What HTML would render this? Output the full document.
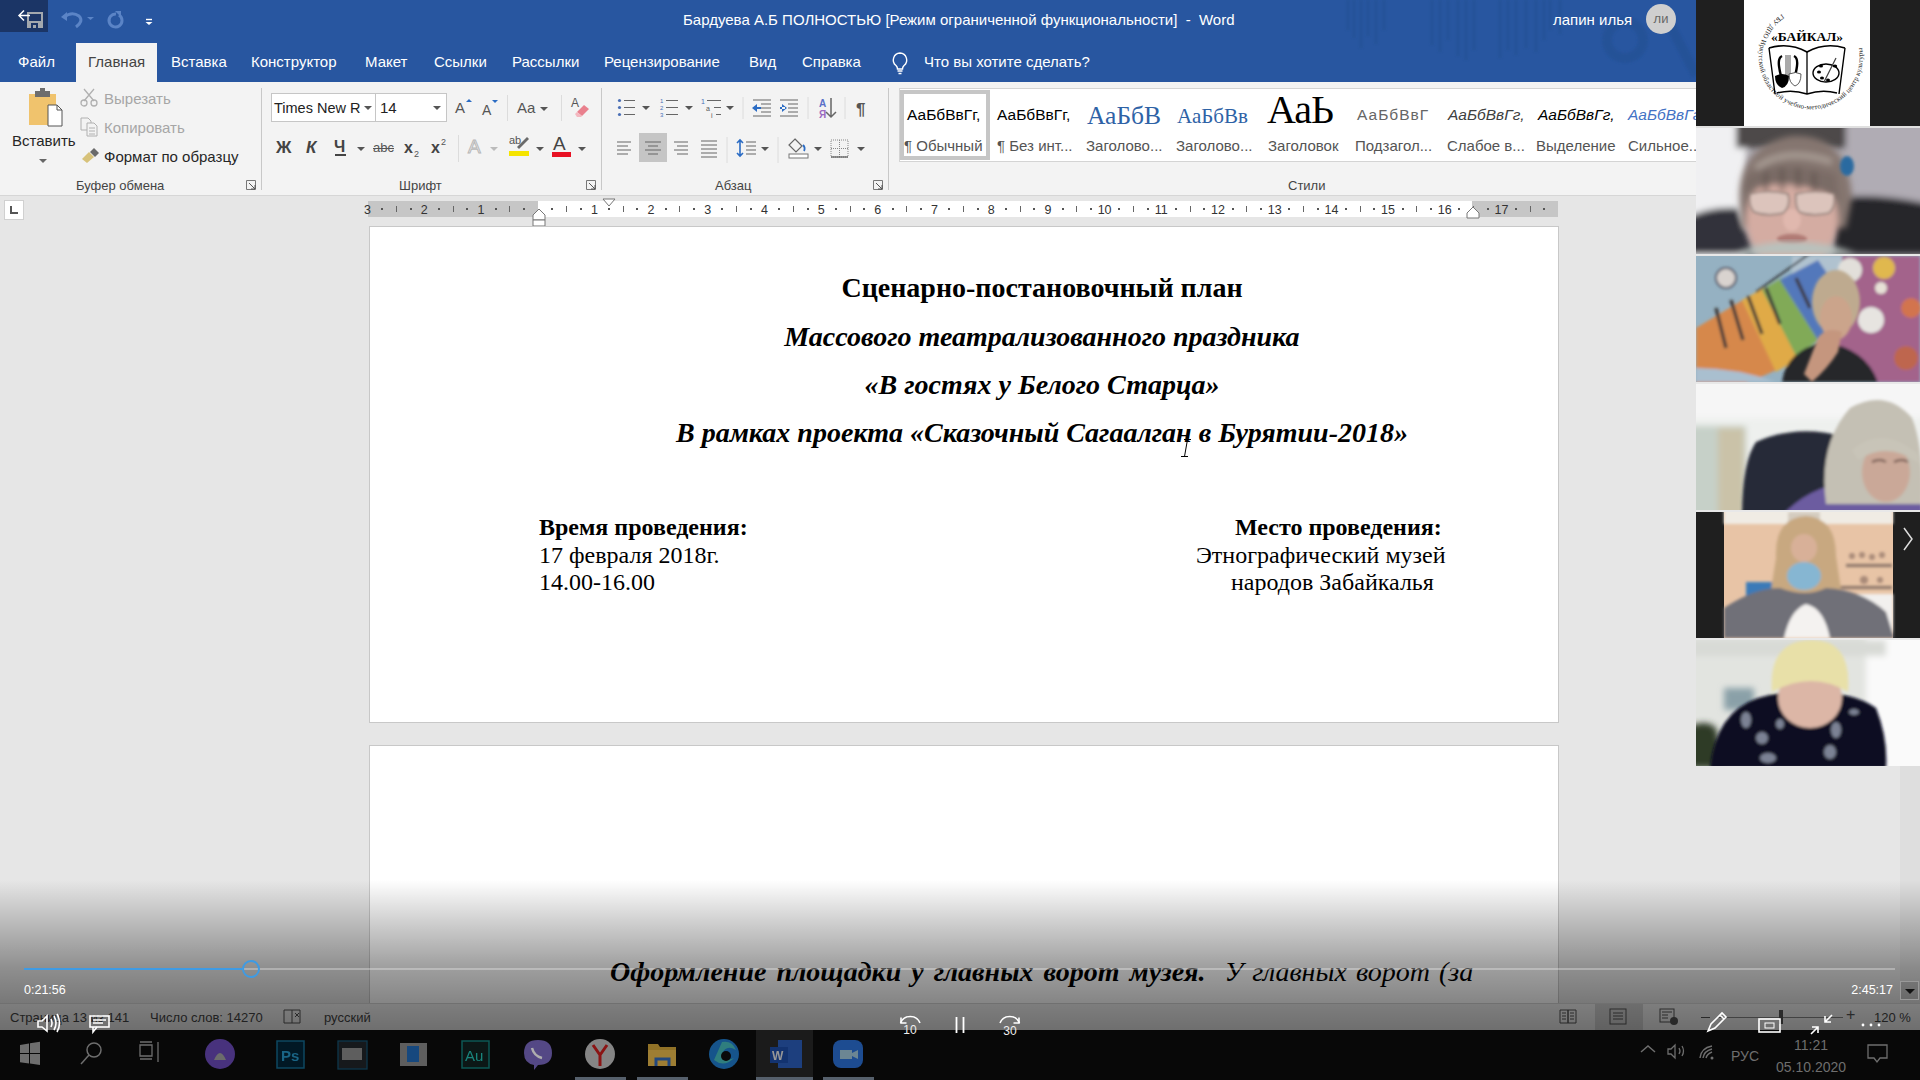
<!DOCTYPE html>
<html><head><meta charset="utf-8">
<style>
*{margin:0;padding:0;box-sizing:border-box}
html,body{width:1920px;height:1080px;overflow:hidden;background:#e6e6e6;font-family:"Liberation Sans",sans-serif;position:relative}
.a{position:absolute}
svg{position:absolute;overflow:visible}
.tt{color:#fff;font-size:15px;white-space:nowrap;line-height:18px}
.tab{color:#fff;font-size:15px;top:53px;white-space:nowrap;line-height:18px}
.rl{font-size:13px;color:#444;white-space:nowrap;line-height:16px;top:178px}
.rt{font-size:15px;color:#262626;white-space:nowrap;line-height:18px}
.sep{width:1px;background:#dadada}
.ser{font-family:"Liberation Serif",serif;color:#000;white-space:nowrap}
.rn{font-size:12.5px;color:#333;top:203px;width:20px;text-align:center;line-height:14px}
.sty{font-size:15.5px;color:#000;white-space:nowrap;line-height:18px;top:106px}
.sn{font-size:15px;color:#545454;white-space:nowrap;line-height:18px;top:137px}
.dd{width:0;height:0;border-left:4px solid transparent;border-right:4px solid transparent;border-top:4px solid #555}

</style></head><body>
<div class="a" style="left:0;top:0;width:1696px;height:82px;background:#2856a0"></div>
<div class="a" style="left:0;top:0;width:48px;height:32px;background:#1b3566"></div>
<!-- back/save icon -->
<svg style="left:0;top:0" width="48" height="32"><path d="M27 12h16v16h-16z" fill="#a3a8ae"/><path d="M29 14h12v7h-12z" fill="#1c3566"/><path d="M31 23h7v5h-7z" fill="#1c3566"/><path d="M33 25h3v3h-3z" fill="#a3a8ae"/><path d="M19 15.5h11M24 10.5l-5 5 5 5" stroke="#fff" stroke-width="1.5" fill="none"/></svg>
<!-- undo / redo -->
<svg style="left:56px;top:0" width="100" height="40"><path d="M8 17q8-6 15 -1q5 5 -3 11" stroke="#5b84c6" stroke-width="3" fill="none"/><path d="M5 17l6-5v9z" fill="#5b84c6"/><path d="M31 17h7l-3.5 3z" fill="#5b84c6"/><path d="M60 14a6.5 6.5 0 1 0 3 1" stroke="#5b84c6" stroke-width="3" fill="none"/><path d="M59 11h6v6z" fill="#5b84c6"/><path d="M90 19.5h6" stroke="#fff" stroke-width="1.4"/><path d="M89.5 22h7l-3.5 3z" fill="#fff"/></svg>
<div class="a tt" style="left:683px;top:11px">Бардуева А.Б ПОЛНОСТЬЮ [Режим ограниченной функциональности]&nbsp; - &nbsp;Word</div>
<!-- faint pattern -->
<svg style="left:1340px;top:0" width="356" height="82" opacity="0.5" filter="url(#pb)"><defs><filter id="pb"><feGaussianBlur stdDeviation="1.2"/></filter></defs><g stroke="#2150928" stroke-width="3" style="stroke:#224f90"><path d="M8 0v30M14 0v38M21 0v48M28 0v36M36 0v44M44 0v30"/><path d="M92 0v45M100 0v52M108 0v40M118 0v56M126 0v60M134 0v50"/><path d="M160 0v58M168 0v50M176 0v55M186 0v48M196 0v52M204 0v40"/><path d="M210 0v30M220 0v34"/></g><circle cx="285" cy="40" r="18" fill="none" style="stroke:#224f90" stroke-width="10"/><path d="M330 25l26 50" style="stroke:#224f90" stroke-width="10"/></svg>
<div class="a tt" style="left:1553px;top:11px">лапин илья</div>
<div class="a" style="left:1646px;top:4px;width:30px;height:30px;border-radius:50%;background:#cfcfcf;color:#666;font-size:13px;text-align:center;line-height:30px">ли</div>
<div class="a" style="left:76px;top:43px;width:81px;height:39px;background:#f3f3f3"></div>
<div class="a tab" style="left:18px">Файл</div>
<div class="a tab" style="left:88px;color:#444">Главная</div>
<div class="a tab" style="left:171px">Вставка</div>
<div class="a tab" style="left:251px">Конструктор</div>
<div class="a tab" style="left:365px">Макет</div>
<div class="a tab" style="left:434px">Ссылки</div>
<div class="a tab" style="left:512px">Рассылки</div>
<div class="a tab" style="left:604px">Рецензирование</div>
<div class="a tab" style="left:749px">Вид</div>
<div class="a tab" style="left:802px">Справка</div>
<svg style="left:890px;top:51px" width="22" height="24"><path d="M10 2a7 7 0 0 0-4 12.5c1 1 1.5 2 1.5 3.5h5c0-1.5.5-2.5 1.5-3.5A7 7 0 0 0 10 2z" stroke="#fff" stroke-width="1.4" fill="none"/><path d="M7.5 20h5M8.5 22.5h3" stroke="#fff" stroke-width="1.4"/></svg>
<div class="a tab" style="left:924px">Что вы хотите сделать?</div>

<div class="a" style="left:0;top:82px;width:1696px;height:113px;background:#f3f3f3"></div>
<div class="a" style="left:0;top:195px;width:1696px;height:1px;background:#d6d6d6"></div>
<!-- Clipboard group -->
<svg style="left:26px;top:88px" width="42" height="42"><rect x="3" y="6" width="27" height="31" fill="#f0c36d"/><rect x="9" y="3" width="15" height="6" fill="#6d6d6d"/><rect x="14" y="0" width="5" height="4" fill="#6d6d6d"/><path d="M22 17h9l5 5v16h-14z" fill="#fff" stroke="#555" stroke-width="1"/><path d="M31 17v5h5" fill="none" stroke="#555" stroke-width="1"/></svg>
<div class="a rt" style="left:12px;top:132px">Вставить</div>
<div class="a dd" style="left:39px;top:159px;border-top-color:#666"></div>
<svg style="left:80px;top:88px" width="20" height="20"><path d="M4 1l10 12M14 1L4 13" stroke="#b0b0b0" stroke-width="1.3"/><circle cx="4" cy="15" r="3" fill="none" stroke="#b0b0b0" stroke-width="1.3"/><circle cx="14" cy="15" r="3" fill="none" stroke="#b0b0b0" stroke-width="1.3"/></svg>
<div class="a rt" style="left:104px;top:90px;color:#a6a6a6">Вырезать</div>
<svg style="left:80px;top:117px" width="20" height="20"><path d="M1 1h7l3 3v9H1z" fill="none" stroke="#b0b0b0"/><path d="M7 6h7l3 3v10H7z" fill="#f3f3f3" stroke="#b0b0b0"/><path d="M9 11h6M9 14h6M9 17h6" stroke="#b0b0b0"/></svg>
<div class="a rt" style="left:104px;top:119px;color:#a6a6a6">Копировать</div>
<svg style="left:81px;top:148px" width="20" height="18"><path d="M1 11l7-7 5 5-7 6z" fill="#d7c27a"/><path d="M9 4l5 5 4-4-5-5z" fill="#6a6a6a"/></svg>
<div class="a rt" style="left:104px;top:148px">Формат по образцу</div>
<div class="a rl" style="left:76px">Буфер обмена</div>
<svg style="left:246px;top:180px" width="11" height="11"><path d="M0.5 0.5h9v9M0.5 0.5v9h9" fill="none" stroke="#777"/><path d="M3 3l6 6M9 5v4H5" stroke="#555" fill="none"/></svg>
<div class="a sep" style="left:261px;top:88px;height:102px;background:#c8c8c8"></div>

<!-- Font group -->
<div class="a" style="left:271px;top:93px;width:176px;height:29px;background:#fff;border:1px solid #c6c6c6"></div>
<div class="a" style="left:375px;top:93px;width:1px;height:29px;background:#c6c6c6"></div>
<div class="a rt" style="left:274px;top:99px;color:#222;font-size:14.5px">Times New R</div>
<div class="a dd" style="left:364px;top:106px"></div>
<div class="a rt" style="left:380px;top:99px;color:#222">14</div>
<div class="a dd" style="left:433px;top:106px"></div>
<div class="a" style="left:455px;top:99px;font-size:15px;color:#555;line-height:18px">A</div>
<div class="a" style="left:466px;top:99px;border-left:3px solid transparent;border-right:3px solid transparent;border-bottom:3px solid #2b6cc4"></div>
<div class="a" style="left:482px;top:101px;font-size:14px;color:#555;line-height:18px">A</div>
<div class="a" style="left:492px;top:100px;border-left:3px solid transparent;border-right:3px solid transparent;border-top:3px solid #2b6cc4"></div>
<div class="a sep" style="left:507px;top:95px;height:26px;background:#dcdcdc"></div>
<div class="a" style="left:517px;top:99px;font-size:15px;color:#555;line-height:18px">Aa</div>
<div class="a dd" style="left:540px;top:107px"></div>
<div class="a sep" style="left:561px;top:95px;height:26px;background:#dcdcdc"></div>
<div class="a" style="left:571px;top:96px;font-size:12px;color:#555;line-height:14px">A</div>
<svg style="left:572px;top:102px" width="18" height="16"><path d="M5 10l7-7 5 4-7 7z" fill="#e9808d"/><path d="M3 12l2-2 5 4-1 1H5z" fill="#f4b8c0"/></svg>
<div class="a" style="left:276px;top:138px;font-size:17px;font-weight:bold;color:#444;line-height:20px">Ж</div>
<div class="a" style="left:306px;top:138px;font-size:17px;font-weight:bold;font-style:italic;color:#444;line-height:20px">К</div>
<div class="a" style="left:334px;top:137px;font-size:16px;font-weight:bold;color:#444;line-height:20px">Ч</div>
<div class="a" style="left:335px;top:154px;width:11px;height:1.5px;background:#444"></div>
<div class="a dd" style="left:357px;top:147px"></div>
<div class="a" style="left:373px;top:140px;font-size:13px;color:#555;line-height:16px">abc</div>
<div class="a" style="left:373px;top:148px;width:21px;height:1px;background:#555"></div>
<div class="a" style="left:404px;top:138px;font-size:16px;font-weight:bold;color:#444;line-height:20px">x</div>
<div class="a" style="left:414px;top:149px;font-size:9px;color:#555;line-height:10px">2</div>
<div class="a" style="left:431px;top:138px;font-size:16px;font-weight:bold;color:#444;line-height:20px">x</div>
<div class="a" style="left:441px;top:137px;font-size:9px;color:#555;line-height:10px">2</div>
<div class="a sep" style="left:458px;top:135px;height:27px;background:#dcdcdc"></div>
<div class="a" style="left:468px;top:137px;font-size:19px;color:#f3f3f3;-webkit-text-stroke:1px #b8b8b8;line-height:20px">A</div>
<div class="a dd" style="left:490px;top:147px;border-top-color:#bbb"></div>
<div class="a" style="left:509px;top:134px;font-size:11px;color:#555;line-height:12px">ab</div>
<svg style="left:510px;top:136px" width="20" height="14"><path d="M7 11l10-10 2 2-10 10z" fill="#6a6a6a"/></svg>
<div class="a" style="left:509px;top:151px;width:20px;height:5px;background:#f5e400"></div>
<div class="a dd" style="left:536px;top:147px"></div>
<div class="a" style="left:553px;top:134px;font-size:19px;color:#444;line-height:20px">A</div>
<div class="a" style="left:552px;top:152px;width:19px;height:5px;background:#e81123"></div>
<div class="a dd" style="left:578px;top:147px"></div>
<div class="a rl" style="left:399px">Шрифт</div>
<svg style="left:586px;top:180px" width="11" height="11"><path d="M0.5 0.5h9v9M0.5 0.5v9h9" fill="none" stroke="#777"/><path d="M3 3l6 6M9 5v4H5" stroke="#555" fill="none"/></svg>
<div class="a sep" style="left:601px;top:88px;height:102px;background:#c8c8c8"></div>

<!-- Paragraph group -->
<svg style="left:612px;top:96px" width="260" height="24">
<g fill="#4a6fb5"><circle cx="7.5" cy="4.5" r="1.6"/><circle cx="7.5" cy="11.5" r="1.6"/><circle cx="7.5" cy="18.5" r="1.6"/></g>
<g stroke="#666" stroke-width="1.2"><path d="M12 4.5h11M12 11.5h11M12 18.5h11"/></g>
<path d="M30 10h8l-4 4z" fill="#555"/>
<g fill="#4a6fb5" font-size="6" font-family="Liberation Sans"><text x="48" y="7">1</text><text x="48" y="14">2</text><text x="48" y="21">3</text></g>
<g stroke="#666" stroke-width="1.2"><path d="M54 4.5h12M54 11.5h12M54 18.5h12"/></g>
<path d="M73 10h8l-4 4z" fill="#555"/>
<g fill="#555" font-size="7" font-family="Liberation Sans"><text x="89" y="8" fill="#4a6fb5">1</text><text x="94" y="15">a</text><text x="99" y="22">i</text></g>
<g stroke="#666" stroke-width="1.2"><path d="M95 4.5h14M102 11.5h7M104 18.5h5"/></g>
<path d="M114 10h8l-4 4z" fill="#555"/>
<path d="M131 1v22" stroke="#dcdcdc"/>
<g stroke="#666" stroke-width="1.2"><path d="M141 4h18M149 8h10M149 12h10M149 16h10M141 20h18"/></g>
<path d="M140 12l5-4v8z M143 11h6v2h-6z" fill="#2b6cc4"/>
<g stroke="#666" stroke-width="1.2"><path d="M168 4h18M176 8h10M176 12h10M176 16h10M168 20h18"/></g>
<path d="M175 12l-5-4v8z M168 11h5v2h-5z" fill="#2b6cc4"/>
<path d="M196 1v22" stroke="#dcdcdc"/>
<text x="207" y="11" font-size="10" font-weight="bold" fill="#5a6fc8" font-family="Liberation Sans">A</text>
<text x="207" y="22" font-size="10" font-weight="bold" fill="#9a6ac0" font-family="Liberation Sans">Я</text>
<path d="M219 2v19M214 16l5 5 5-5" stroke="#666" stroke-width="1.5" fill="none"/>
<path d="M233 1v22" stroke="#dcdcdc"/>
<text x="244" y="19" font-size="17" fill="#555" font-family="Liberation Sans" font-weight="bold">¶</text>
</svg>
<div class="a" style="left:639px;top:133px;width:28px;height:29px;background:#c5c5c5"></div>
<svg style="left:612px;top:137px" width="260" height="24">
<g stroke="#666" stroke-width="1.2">
<path d="M5 5h14M5 9h11M5 13h14M5 17h11"/>
<path d="M33 5h16M36 9h10M33 13h16M36 17h10"/>
<path d="M62 5h14M65 9h11M62 13h14M65 17h11"/>
<path d="M89 4h16M89 8h16M89 12h16M89 16h16M89 20h16"/>
</g>
<path d="M115 0v26" stroke="#dcdcdc"/>
<path d="M128 3v16M125 6l3-3 3 3M125 16l3 3 3-3" stroke="#2b6cc4" stroke-width="1.6" fill="none"/>
<g stroke="#666" stroke-width="1.2"><path d="M134 5h10M134 9h10M134 13h10M134 17h10"/></g>
<path d="M149 10h8l-4 4z" fill="#555"/>
<path d="M166 0v26" stroke="#dcdcdc"/>
<path d="M183 2l7 7-6 6-7-7z" fill="none" stroke="#666" stroke-width="1.2"/><path d="M191 8c2 2 2 4 1 6" stroke="#2b6cc4" stroke-width="1.8" fill="none"/>
<rect x="177" y="17" width="19" height="4" fill="#fff" stroke="#777"/>
<path d="M202 10h8l-4 4z" fill="#555"/>
<path d="M219 3h17v17h-17z M227.5 3v17 M219 11.5h17" fill="none" stroke="#888" stroke-dasharray="1 1"/>
<path d="M219 20h17" stroke="#555" stroke-width="1.2"/>
<path d="M245 10h8l-4 4z" fill="#555"/>
</svg>
<div class="a rl" style="left:715px">Абзац</div>
<svg style="left:873px;top:180px" width="11" height="11"><path d="M0.5 0.5h9v9M0.5 0.5v9h9" fill="none" stroke="#777"/><path d="M3 3l6 6M9 5v4H5" stroke="#555" fill="none"/></svg>
<div class="a sep" style="left:888px;top:88px;height:102px;background:#c8c8c8"></div>

<!-- Styles -->
<div class="a" style="left:899px;top:88px;width:797px;height:74px;background:#fff;border:1px solid #d4d4d4;border-right:none"></div>
<div class="a" style="left:900px;top:90px;width:90px;height:70px;border:4px solid #c6c6c6"></div>
<div class="a sty" style="left:907px">АаБбВвГг,</div>
<div class="a sn" style="left:904px">¶ Обычный</div>
<div class="a sty" style="left:997px">АаБбВвГг,</div>
<div class="a sn" style="left:997px">¶ Без инт...</div>
<div class="a sty" style="left:1087px;top:101px;font-family:'Liberation Serif',serif;font-size:25.5px;color:#2e62a6;line-height:30px">АаБбВ</div>
<div class="a sn" style="left:1086px">Заголово...</div>
<div class="a sty" style="left:1177px;top:103px;font-family:'Liberation Serif',serif;font-size:21px;color:#2e62a6;line-height:26px">АаБбВв</div>
<div class="a sn" style="left:1176px">Заголово...</div>
<div class="a sty" style="left:1267px;top:86px;font-family:'Liberation Serif',serif;font-size:40px;color:#000;line-height:48px;letter-spacing:-1px">АаЬ</div>
<div class="a sn" style="left:1268px">Заголовок</div>
<div class="a sty" style="left:1357px;color:#666;letter-spacing:1px">АаБбВвГ</div>
<div class="a sn" style="left:1355px">Подзагол...</div>
<div class="a sty" style="left:1448px;font-style:italic;color:#404040">АаБбВвГг,</div>
<div class="a sn" style="left:1447px">Слабое в...</div>
<div class="a sty" style="left:1538px;font-style:italic;color:#000">АаБбВвГг,</div>
<div class="a sn" style="left:1536px">Выделение</div>
<div class="a sty" style="left:1628px;font-style:italic;color:#4472c4">АаБбВвГг</div>
<div class="a sn" style="left:1628px">Сильное...</div>
<div class="a rl" style="left:1288px">Стили</div>

<div class="a" style="left:0;top:196px;width:1696px;height:834px;background:#e6e6e6"></div>
<div class="a" style="left:4px;top:200px;width:20px;height:20px;background:#fff;border:1px solid #d0d0d0"></div>
<div class="a" style="left:10px;top:206px;width:2px;height:8px;background:#555"></div>
<div class="a" style="left:10px;top:212px;width:8px;height:2px;background:#555"></div>
<div class="a" style="left:368px;top:201px;width:170px;height:16px;background:#c6c6c6"></div>
<div class="a" style="left:538px;top:201px;width:934px;height:16px;background:#fff"></div>
<div class="a" style="left:1472px;top:201px;width:86px;height:16px;background:#c6c6c6"></div>
<div class="a rn" style="left:357.6px">3</div>
<div class="a" style="left:381.3px;top:208px;width:2px;height:2px;background:#555"></div>
<div class="a" style="left:396.0px;top:206px;width:1px;height:6px;background:#666"></div>
<div class="a" style="left:409.6px;top:208px;width:2px;height:2px;background:#555"></div>
<div class="a rn" style="left:414.3px">2</div>
<div class="a" style="left:438.0px;top:208px;width:2px;height:2px;background:#555"></div>
<div class="a" style="left:452.7px;top:206px;width:1px;height:6px;background:#666"></div>
<div class="a" style="left:466.3px;top:208px;width:2px;height:2px;background:#555"></div>
<div class="a rn" style="left:471.0px">1</div>
<div class="a" style="left:494.7px;top:208px;width:2px;height:2px;background:#555"></div>
<div class="a" style="left:509.4px;top:206px;width:1px;height:6px;background:#666"></div>
<div class="a" style="left:523.0px;top:208px;width:2px;height:2px;background:#555"></div>
<div class="a" style="left:551.4px;top:208px;width:2px;height:2px;background:#555"></div>
<div class="a" style="left:566.0px;top:206px;width:1px;height:6px;background:#666"></div>
<div class="a" style="left:579.7px;top:208px;width:2px;height:2px;background:#555"></div>
<div class="a rn" style="left:584.4px">1</div>
<div class="a" style="left:608.1px;top:208px;width:2px;height:2px;background:#555"></div>
<div class="a" style="left:622.7px;top:206px;width:1px;height:6px;background:#666"></div>
<div class="a" style="left:636.4px;top:208px;width:2px;height:2px;background:#555"></div>
<div class="a rn" style="left:641.1px">2</div>
<div class="a" style="left:664.8px;top:208px;width:2px;height:2px;background:#555"></div>
<div class="a" style="left:679.4px;top:206px;width:1px;height:6px;background:#666"></div>
<div class="a" style="left:693.1px;top:208px;width:2px;height:2px;background:#555"></div>
<div class="a rn" style="left:697.8px">3</div>
<div class="a" style="left:721.4px;top:208px;width:2px;height:2px;background:#555"></div>
<div class="a" style="left:736.1px;top:206px;width:1px;height:6px;background:#666"></div>
<div class="a" style="left:749.8px;top:208px;width:2px;height:2px;background:#555"></div>
<div class="a rn" style="left:754.5px">4</div>
<div class="a" style="left:778.1px;top:208px;width:2px;height:2px;background:#555"></div>
<div class="a" style="left:792.8px;top:206px;width:1px;height:6px;background:#666"></div>
<div class="a" style="left:806.5px;top:208px;width:2px;height:2px;background:#555"></div>
<div class="a rn" style="left:811.2px">5</div>
<div class="a" style="left:834.8px;top:208px;width:2px;height:2px;background:#555"></div>
<div class="a" style="left:849.5px;top:206px;width:1px;height:6px;background:#666"></div>
<div class="a" style="left:863.2px;top:208px;width:2px;height:2px;background:#555"></div>
<div class="a rn" style="left:867.8px">6</div>
<div class="a" style="left:891.5px;top:208px;width:2px;height:2px;background:#555"></div>
<div class="a" style="left:906.2px;top:206px;width:1px;height:6px;background:#666"></div>
<div class="a" style="left:919.9px;top:208px;width:2px;height:2px;background:#555"></div>
<div class="a rn" style="left:924.5px">7</div>
<div class="a" style="left:948.2px;top:208px;width:2px;height:2px;background:#555"></div>
<div class="a" style="left:962.9px;top:206px;width:1px;height:6px;background:#666"></div>
<div class="a" style="left:976.5px;top:208px;width:2px;height:2px;background:#555"></div>
<div class="a rn" style="left:981.2px">8</div>
<div class="a" style="left:1004.9px;top:208px;width:2px;height:2px;background:#555"></div>
<div class="a" style="left:1019.6px;top:206px;width:1px;height:6px;background:#666"></div>
<div class="a" style="left:1033.2px;top:208px;width:2px;height:2px;background:#555"></div>
<div class="a rn" style="left:1037.9px">9</div>
<div class="a" style="left:1061.6px;top:208px;width:2px;height:2px;background:#555"></div>
<div class="a" style="left:1076.3px;top:206px;width:1px;height:6px;background:#666"></div>
<div class="a" style="left:1089.9px;top:208px;width:2px;height:2px;background:#555"></div>
<div class="a rn" style="left:1094.6px">10</div>
<div class="a" style="left:1118.3px;top:208px;width:2px;height:2px;background:#555"></div>
<div class="a" style="left:1132.9px;top:206px;width:1px;height:6px;background:#666"></div>
<div class="a" style="left:1146.6px;top:208px;width:2px;height:2px;background:#555"></div>
<div class="a rn" style="left:1151.3px">11</div>
<div class="a" style="left:1175.0px;top:208px;width:2px;height:2px;background:#555"></div>
<div class="a" style="left:1189.6px;top:206px;width:1px;height:6px;background:#666"></div>
<div class="a" style="left:1203.3px;top:208px;width:2px;height:2px;background:#555"></div>
<div class="a rn" style="left:1208.0px">12</div>
<div class="a" style="left:1231.7px;top:208px;width:2px;height:2px;background:#555"></div>
<div class="a" style="left:1246.3px;top:206px;width:1px;height:6px;background:#666"></div>
<div class="a" style="left:1260.0px;top:208px;width:2px;height:2px;background:#555"></div>
<div class="a rn" style="left:1264.7px">13</div>
<div class="a" style="left:1288.3px;top:208px;width:2px;height:2px;background:#555"></div>
<div class="a" style="left:1303.0px;top:206px;width:1px;height:6px;background:#666"></div>
<div class="a" style="left:1316.7px;top:208px;width:2px;height:2px;background:#555"></div>
<div class="a rn" style="left:1321.4px">14</div>
<div class="a" style="left:1345.0px;top:208px;width:2px;height:2px;background:#555"></div>
<div class="a" style="left:1359.7px;top:206px;width:1px;height:6px;background:#666"></div>
<div class="a" style="left:1373.4px;top:208px;width:2px;height:2px;background:#555"></div>
<div class="a rn" style="left:1378.0px">15</div>
<div class="a" style="left:1401.7px;top:208px;width:2px;height:2px;background:#555"></div>
<div class="a" style="left:1416.4px;top:206px;width:1px;height:6px;background:#666"></div>
<div class="a" style="left:1430.1px;top:208px;width:2px;height:2px;background:#555"></div>
<div class="a rn" style="left:1434.7px">16</div>
<div class="a" style="left:1458.4px;top:208px;width:2px;height:2px;background:#555"></div>
<div class="a" style="left:1473.1px;top:206px;width:1px;height:6px;background:#666"></div>
<div class="a" style="left:1486.8px;top:208px;width:2px;height:2px;background:#555"></div>
<div class="a rn" style="left:1491.4px">17</div>
<div class="a" style="left:1515.1px;top:208px;width:2px;height:2px;background:#555"></div>
<div class="a" style="left:1529.8px;top:206px;width:1px;height:6px;background:#666"></div>
<div class="a" style="left:1543.4px;top:208px;width:2px;height:2px;background:#555"></div>
<svg style="left:531px;top:198px" width="90" height="32"><path d="M2 17l6-6 6 6v5H2z" fill="#fff" stroke="#777"/><path d="M2 22h12v6H2z" fill="#fff" stroke="#777"/><path d="M72 1h12l-6 7z" fill="#fff" stroke="#777"/></svg>
<svg style="left:1466px;top:196px" width="16" height="24"><path d="M1 17l6-6 6 6v5H1z" fill="#fff" stroke="#777"/></svg>
<div class="a" style="left:369px;top:226px;width:1190px;height:497px;background:#fff;border:1px solid #c8c8c8"></div>
<div class="a" style="left:369px;top:745px;width:1190px;height:300px;background:#fff;border:1px solid #c8c8c8"></div>
<div class="a ser" style="left:0;width:2084px;text-align:center;top:272px;font-size:28px;font-weight:bold;line-height:32px">Сценарно-постановочный план</div>
<div class="a ser" style="left:0;width:2084px;text-align:center;top:321px;font-size:28px;font-weight:bold;font-style:italic;line-height:32px">Массового театрализованного праздника</div>
<div class="a ser" style="left:0;width:2084px;text-align:center;top:369px;font-size:28px;font-weight:bold;font-style:italic;line-height:32px">«В гостях у Белого Старца»</div>
<div class="a ser" style="left:0;width:2084px;text-align:center;top:417px;font-size:28px;font-weight:bold;font-style:italic;line-height:32px">В рамках проекта «Сказочный Сагаалган в Бурятии-2018»</div>
<svg style="left:1180px;top:438px" width="12" height="22"><path d="M4 1.5h7M7.5 1.5l-3 17M1 18.5h7" stroke="#000" stroke-width="1"/></svg>
<div class="a ser" style="left:539px;top:514px;font-size:24px;line-height:27.5px"><b>Время проведения:</b><br>17 февраля 2018г.<br>14.00-16.00</div>
<div class="a ser" style="left:1235px;top:514px;font-size:24px;line-height:27.5px;font-weight:bold">Место проведения:</div>
<div class="a ser" style="left:1196px;top:541.5px;font-size:24px;line-height:27.5px">Этнографический музей</div>
<div class="a ser" style="left:1231px;top:569px;font-size:24px;line-height:27.5px">народов Забайкалья</div>
<div class="a ser" style="left:610px;top:956px;font-size:28px;line-height:32px;font-style:italic;word-spacing:3px"><b>Оформление площадки у главных ворот музея.</b> <span style="word-spacing:2px;margin-left:9px">У главных ворот (за</span></div>

<div class="a" style="left:1696px;top:0;width:224px;height:1030px;background:#e6e6e6"></div>
<!-- logo tile -->
<div class="a" style="left:1696px;top:0;width:224px;height:126px;background:#1f1f1f"></div>
<div class="a" style="left:1744px;top:0;width:126px;height:126px;background:#fff"></div>
<svg style="left:1744px;top:0" width="126" height="126">
<defs><path id="arc" d="M38 14 A52 52 0 1 0 118 48"/></defs>
<text font-family="Liberation Serif" font-size="7" fill="#222" letter-spacing="0.2"><textPath href="#arc">ГБУ ДПО Иркутский областной учебно-методический центр культуры и искусства</textPath></text>
<text x="63" y="41" text-anchor="middle" font-family="Liberation Serif" font-weight="bold" font-size="13.5" fill="#000">«БАЙКАЛ»</text>
<path d="M25 48q20-6 38 4q18-10 38-4" fill="none" stroke="#000" stroke-width="1.6"/>
<path d="M25 48l6 46M101 48l-6 46" stroke="#000" stroke-width="1.4"/>
<path d="M33 93q15-4 30 1q15-5 30-1" fill="none" stroke="#000" stroke-width="1.4"/>
<path d="M63 52v42" stroke="#000" stroke-width="1.3"/>
<path d="M38 56q-4 2-3 10q1 8 3 12M50 56q4 2 3 10q-1 8-3 12" stroke="#000" stroke-width="2.4" fill="none"/>
<rect x="41" y="55" width="6" height="22" fill="#aaa"/>
<path d="M31 76q7-4 14 0q0 10-7 12q-7-3-7-12z" fill="#000"/>
<path d="M45 74q7-3 12 0q0 10-6 12q-6-3-6-12z" fill="#fff" stroke="#333" stroke-width="0.8"/>
<ellipse cx="82" cy="73" rx="13" ry="9" fill="none" stroke="#000" stroke-width="1.4"/>
<g fill="#000"><ellipse cx="75" cy="72" rx="2" ry="1.6"/><ellipse cx="78" cy="78" rx="2" ry="1.6"/><ellipse cx="84" cy="80" rx="2" ry="1.6"/><ellipse cx="91" cy="66" rx="2.2" ry="1.6"/><ellipse cx="77" cy="66" rx="2" ry="1.6"/></g>
<path d="M80 82l12-24" stroke="#444" stroke-width="1.2"/>
</svg>
<div class="a" style="left:1696px;top:126px;width:224px;height:2px;background:#e0e0e0"></div>
<svg style="left:1696px;top:128px" width="224" height="766">
<defs>
<filter id="b1" x="-20%" y="-20%" width="140%" height="140%"><feGaussianBlur stdDeviation="1.5"/></filter>
<filter id="b3" x="-20%" y="-20%" width="140%" height="140%"><feGaussianBlur stdDeviation="3"/></filter>
<filter id="b6" x="-30%" y="-30%" width="160%" height="160%"><feGaussianBlur stdDeviation="6"/></filter>
<clipPath id="c1"><rect x="0" y="0" width="224" height="126"/></clipPath>
<clipPath id="c2"><rect x="0" y="128" width="224" height="126"/></clipPath>
<clipPath id="c3"><rect x="0" y="256" width="224" height="126"/></clipPath>
<clipPath id="c4"><rect x="0" y="384" width="224" height="126"/></clipPath>
<clipPath id="c5"><rect x="0" y="512" width="224" height="126"/></clipPath>
</defs>
<!-- cam1 -->
<g clip-path="url(#c1)">
<rect x="0" y="0" width="224" height="126" fill="#aaa6ac"/>
<g filter="url(#b3)">
<rect x="-10" y="-10" width="60" height="150" fill="#f0f0f2"/>
<rect x="40" y="-10" width="130" height="30" fill="#4e4848"/>
<rect x="150" y="-10" width="90" height="90" fill="#b0acb4"/>
<path d="M-10 126v-36q24-12 52-10l16 46z" fill="#30323a"/>
<path d="M138 126v-56q40-6 96 6v50z" fill="#28262a"/>
</g>
<g filter="url(#b3)">
<path d="M44 80q-6-60 50-72q58-4 62 62l-6 30h-104z" fill="#857670"/>
<path d="M60 40q30-22 76-6" stroke="#a89c94" stroke-width="6" fill="none"/>
<ellipse cx="96" cy="92" rx="46" ry="48" fill="#d4aca2"/>
<path d="M50 48q30-20 90-2l4 30q-14-14-40-18q-30-6-58 8z" fill="#7a6c66"/>
<path d="M70 44v22M86 40v24M102 40v22M118 44v22" stroke="#5a4e4a" stroke-width="3"/>
</g>
<g filter="url(#b1)">
<path d="M54 66q18-5 38 0q3 13-5 19q-16 4-29-1q-6-7-4-18z" fill="#dcc4bc" stroke="#8a7a74" stroke-width="1.5"/>
<path d="M100 66q20-5 38 0q2 13-5 19q-17 4-30-1q-4-7-3-18z" fill="#dcc4bc" stroke="#8a7a74" stroke-width="1.5"/>
<ellipse cx="96" cy="92" rx="9" ry="11" fill="#e0b8ae"/>
<ellipse cx="96" cy="111" rx="15" ry="5" fill="#b07a74"/>
</g>
<path d="M40 126q20-12 56-12q36 0 64 12z" fill="#b8c2be" filter="url(#b3)"/>
<ellipse cx="151" cy="38" rx="7" ry="10" fill="#2a6aa0" filter="url(#b1)"/>
</g>
<!-- cam2 -->
<g clip-path="url(#c2)">
<rect x="0" y="128" width="224" height="126" fill="#98b8c8"/>
<g filter="url(#b1)">
<rect x="128" y="128" width="96" height="126" fill="#a85c88"/>
<rect x="96" y="128" width="50" height="60" fill="#b8ccd8"/>
<path d="M0 200l50-30 35 70-45 20h-40z" fill="#e4883c"/>
<path d="M46 172l22-12 42 66-30 18z" fill="#f0b038"/>
<path d="M66 162l20-12 42 58-28 20z" fill="#80b04c"/>
<path d="M84 152l38-20 36 52-36 28z" fill="#4c74c0"/>
<path d="M20 180l10 40M35 172l12 40M52 168l14 38M70 160l14 36M100 150l14 30" stroke="#302a28" stroke-width="3.5"/>
<path d="M60 164l70-50" stroke="#202020" stroke-width="2"/>
<circle cx="30" cy="150" r="10" fill="#e8e0d8" stroke="#505060" stroke-width="2"/>
<circle cx="175" cy="192" r="13" fill="#f8f4ec"/>
<circle cx="154" cy="142" r="12" fill="#f2eee4"/>
<circle cx="188" cy="140" r="11" fill="#f0c040"/>
<circle cx="185" cy="160" r="6" fill="#f8f0e0"/>
<circle cx="210" cy="230" r="12" fill="#c86040"/>
<circle cx="215" cy="180" r="10" fill="#e07040"/>
<path d="M86 254q4-32 42-40q42 6 54 40z" fill="#141218"/>
<path d="M0 240q40 0 80 14h-80z" fill="#b0c8d8"/>
</g>
<g filter="url(#b1)">
<ellipse cx="140" cy="174" rx="24" ry="32" fill="#c8b08c"/>
<ellipse cx="140" cy="190" rx="16" ry="22" fill="#d8a888"/>
<path d="M122 210q8-12 24-6l-4 20q-10 16-26 30l-8-8z" fill="#d09878"/>
</g>
<rect x="0" y="128" width="224" height="126" fill="#8890a0" opacity="0.15"/>
</g>
<!-- cam3 -->
<g clip-path="url(#c3)">
<rect x="0" y="256" width="224" height="126" fill="#eef0ee"/>
<g filter="url(#b3)">
<rect x="-10" y="250" width="240" height="40" fill="#f6f6f6"/>
<rect x="-10" y="298" width="60" height="100" fill="#c6d0c8"/>
<rect x="22" y="300" width="26" height="90" fill="#cac2a8"/>
</g>
<g filter="url(#b1)">
<path d="M46 390q0-56 14-76q40-18 86-6l-4 82z" fill="#262a38"/>
<path d="M84 390q26-30 66-36q46-4 76 20v16z" fill="#6c5ca0"/>
<path d="M130 376q-8-60 24-96q36-20 62 10q12 30 10 86z" fill="#c4c0b4"/>
<ellipse cx="190" cy="344" rx="24" ry="30" fill="#caa898"/>
<path d="M156 322q30-26 66 4l2 10q-32-24-62-4z" fill="#c8c4b8"/>
<path d="M176 334q8-4 14 0M198 334q8-4 14 0" stroke="#6a5048" stroke-width="2" fill="none"/>
</g>
</g>
<!-- cam4 -->
<g clip-path="url(#c4)">
<rect x="0" y="384" width="224" height="126" fill="#1f1f1f"/>
<rect x="28" y="384" width="169" height="126" fill="#e8c4a6"/>
<g filter="url(#b1)">
<rect x="28" y="380" width="169" height="16" fill="#f0ece4"/>
<rect x="92" y="384" width="32" height="14" fill="#d4ccc0"/>
<rect x="150" y="436" width="46" height="3" fill="#8a7468"/>
<rect x="142" y="458" width="54" height="3" fill="#8a7468"/>
<g fill="#a88a78"><circle cx="156" cy="428" r="3"/><circle cx="166" cy="427" r="3"/><circle cx="176" cy="429" r="3"/><circle cx="186" cy="427" r="3"/><circle cx="168" cy="452" r="4"/><circle cx="184" cy="452" r="3"/></g>
<rect x="150" y="466" width="47" height="44" fill="#f2f0ee"/>
<rect x="50" y="454" width="36" height="22" fill="#3a7ab8"/>
<path d="M80 430q-2-40 30-42q30 2 30 40l6 40h-72z" fill="#c8a880"/>
<ellipse cx="108" cy="420" rx="13" ry="14" fill="#d8b098"/>
<path d="M28 510v-30q30-20 56-20q26 10 46 0q36 2 60 24l8 26z" fill="#707078"/>
<path d="M88 510q6-28 22-34q18 4 24 34z" fill="#f4f2f0"/>
<ellipse cx="108" cy="448" rx="17" ry="14" fill="#86b6d2"/>
</g>
<path d="M208 400l8 11-8 11" stroke="#ddd" stroke-width="1.5" fill="none"/>
</g>
<!-- cam5 -->
<g clip-path="url(#c5)">
<rect x="0" y="512" width="224" height="126" fill="#e2e4e0"/>
<g filter="url(#b3)">
<rect x="170" y="500" width="70" height="150" fill="#fafafa"/>
<rect x="-10" y="512" width="200" height="16" fill="#d8dad6"/>
<path d="M-10 640v-40q20-10 30 0l10 40z" fill="#2e3a26"/>
<rect x="28" y="560" width="30" height="22" fill="#8aa0a8"/>
</g>
<g filter="url(#b1)">
<path d="M14 640q6-56 48-70q30-8 52-6q44 0 66 16q12 30 10 60z" fill="#0c1024"/>
<ellipse cx="114" cy="570" rx="32" ry="30" fill="#dcb6a6"/>
<path d="M76 564q-4-52 40-52q40 0 36 52q-36-22-76 0z" fill="#e8e0a8"/>
<g fill="#7c8294"><ellipse cx="50" cy="592" rx="5" ry="8"/><ellipse cx="66" cy="610" rx="6" ry="6"/><ellipse cx="72" cy="630" rx="8" ry="5"/><ellipse cx="140" cy="602" rx="5" ry="8"/><ellipse cx="134" cy="624" rx="6" ry="7"/><ellipse cx="158" cy="584" rx="5" ry="3"/><ellipse cx="84" cy="596" rx="4" ry="5"/></g>
</g>
</g>
<!-- separators -->
<rect x="0" y="126" width="224" height="2" fill="#e8e8e8"/>
<rect x="0" y="254" width="224" height="2" fill="#e8e8e8"/>
<rect x="0" y="382" width="224" height="2" fill="#e8e8e8"/>
<rect x="0" y="510" width="224" height="2" fill="#e8e8e8"/>
</svg>
<div class="a" style="left:1900px;top:766px;width:20px;height:264px;background:#dedede"></div>

<!-- status bar -->
<div class="a" style="left:0;top:1003px;width:1920px;height:27px;background:#f1f1f1;border-top:1px solid #d6d6d6"></div>
<div class="a" style="left:10px;top:1010px;font-size:13px;color:#444;line-height:15px;white-space:nowrap">Страница 13 из 141</div>
<div class="a" style="left:150px;top:1010px;font-size:13px;color:#444;line-height:15px;white-space:nowrap">Число слов: 14270</div>
<svg style="left:283px;top:1007px" width="20" height="20"><path d="M1 3h8v13H1zM9 3h8v13H9" fill="none" stroke="#555"/><path d="M12 6l4 4M16 6l-4 4" stroke="#555"/></svg>
<div class="a" style="left:324px;top:1010px;font-size:13px;color:#444;line-height:15px">русский</div>
<div class="a" style="left:1595px;top:1004px;width:48px;height:26px;background:#d2d2d2"></div>
<svg style="left:1558px;top:1008px" width="130" height="18">
<path d="M2 2h8v13H2zM10 2h8v13h-8z" fill="none" stroke="#555"/><path d="M4 5h4M4 8h4M4 11h4M12 5h4M12 8h4M12 11h4" stroke="#555"/>
<rect x="52" y="1" width="16" height="15" fill="none" stroke="#555"/><path d="M55 5h10M55 8h10M55 11h10" stroke="#555"/>
<rect x="102" y="1" width="14" height="13" fill="none" stroke="#555"/><path d="M104 4h10M104 7h6M104 10h6" stroke="#555"/><circle cx="116" cy="13" r="4" fill="#555"/>
</svg>
<div class="a" style="left:1701px;top:1017px;width:9px;height:1px;background:#555"></div>
<div class="a" style="left:1717px;top:1017px;width:126px;height:1px;background:#888"></div>
<div class="a" style="left:1779px;top:1010px;width:4px;height:14px;background:#555"></div>
<div class="a" style="left:1846px;top:1007px;font-size:16px;color:#555;line-height:16px">+</div>
<div class="a" style="left:1874px;top:1010px;font-size:13px;color:#444;line-height:15px;white-space:nowrap">120 %</div>
<!-- video gradient overlay -->
<div class="a" style="left:0;top:880px;width:1920px;height:150px;background:linear-gradient(to bottom,rgba(0,0,0,0) 0px,rgba(0,0,0,0.2) 45px,rgba(0,0,0,0.38) 88px,rgba(0,0,0,0.47) 120px,rgba(0,0,0,0.54) 150px)"></div>
<!-- progress -->
<div class="a" style="left:24px;top:968px;width:1871px;height:2px;background:rgba(255,255,255,0.3)"></div>
<div class="a" style="left:24px;top:968px;width:218px;height:2px;background:#3e9be4"></div>
<div class="a" style="left:242px;top:960px;width:18px;height:18px;border-radius:50%;border:2px solid #3e9be4"></div>
<div class="a" style="left:24px;top:983px;font-size:12.5px;color:#fff;line-height:15px">0:21:56</div>
<div class="a" style="left:1793px;width:100px;text-align:right;top:983px;font-size:12.5px;color:#fff;line-height:15px">2:45:17</div>
<div class="a" style="left:1900px;top:981px;width:19px;height:19px;border:1px solid #999;background:rgba(0,0,0,0.1)"></div>
<div class="a" style="left:1905px;top:989px;border-left:5px solid transparent;border-right:5px solid transparent;border-top:5px solid #111"></div>
<!-- taskbar -->
<div class="a" style="left:0;top:1030px;width:1920px;height:50px;background:#080808"></div>
<div class="a" style="left:756px;top:1030px;width:57px;height:50px;background:#1b1b1b"></div>
<svg style="left:0;top:1030px" width="1920" height="50">
<g fill="#6e6e6e"><path d="M20 15l9-1.5v9.5h-9z M30 13.3l10-1.6v11.3h-10z M20 24h9v9.5l-9-1.3z M30 24h10v11l-10-1.5z"/></g>
<circle cx="94" cy="20" r="7" fill="none" stroke="#6e6e6e" stroke-width="1.5"/><path d="M89 25l-8 9" stroke="#6e6e6e" stroke-width="1.5"/>
<g stroke="#6e6e6e" stroke-width="1.3" fill="none"><path d="M140 15h12v11h-12zM140 12h12M140 29h12M158 12v20"/></g>
<g opacity="0.78"><circle cx="220" cy="24" r="15" fill="#5a3e9e"/><path d="M214 30q6-14 12 0z" fill="#888"/>
<rect x="277" y="11" width="27" height="27" fill="#001d2e" stroke="#0f5a7a" stroke-width="1.5"/><text x="281" y="31" font-size="15" font-weight="bold" fill="#1e7ea8" font-family="Liberation Sans">Ps</text>
<rect x="338" y="11" width="29" height="28" fill="#1a1e22" stroke="#10445e" stroke-width="1.3"/><path d="M342 18h20v12h-20z" fill="#777"/>
<rect x="400" y="13" width="27" height="23" fill="#777"/><rect x="407" y="16" width="12" height="16" fill="#1a5aa0"/>
<rect x="462" y="11" width="27" height="27" fill="#0e1c1a" stroke="#0f6e6a" stroke-width="1.5"/><text x="465" y="31" font-size="15" fill="#1ea89e" font-family="Liberation Sans">Au</text>
<path d="M538 10q14 0 14 13q0 12-14 12l-4 5v-5q-10-2-10-12q0-13 14-13z" fill="#6a5aa8"/><path d="M532 18q2 8 10 10" stroke="#ddd" stroke-width="2.5" fill="none"/>
<circle cx="600" cy="24" r="15" fill="#a8a8a8"/><path d="M593 15l7 10 7-10M600 25v11" stroke="#b01818" stroke-width="3" fill="none"/>
<path d="M648 14h10l2 3h16v19h-28z" fill="#b89030"/><path d="M648 20h28v16h-28z" fill="#c8a040"/><path d="M656 36v-7h13v7" stroke="#2a5aa0" stroke-width="3" fill="none"/>
<circle cx="724" cy="24" r="15" fill="#1a6ab0"/><path d="M714 30q10 8 20-2q-8 4-12-4q4-10 14-4q-4-10-14-8" fill="#3aa0a0"/><circle cx="726" cy="26" r="5" fill="#0b0b0b"/>
<rect x="778" y="10" width="24" height="28" fill="#1e4a9a"/><rect x="770" y="17" width="18" height="16" fill="#123a88"/><text x="772" y="30" font-size="12" fill="#bbb" font-weight="bold" font-family="Liberation Sans">W</text>
<rect x="833" y="10" width="30" height="28" rx="8" fill="#2460b8"/><path d="M840 20h12v9h-12zM852 23l6-3v9l-6-3z" fill="#8ab"/></g>
<g fill="#56606c"><rect x="575" y="47" width="51" height="3"/><rect x="637" y="47" width="51" height="3"/><rect x="756" y="47" width="57" height="3"/><rect x="823" y="47" width="51" height="3"/></g>
<path d="M1641 22l7-6 7 6" stroke="#6e6e6e" stroke-width="1.5" fill="none"/>
<path d="M1668 19h3l4-4v13l-4-4h-3z" stroke="#6e6e6e" stroke-width="1.3" fill="none"/><path d="M1679 18q2 3 0 6M1682 16q3 5 0 10" stroke="#6e6e6e" stroke-width="1.3" fill="none"/>
<path d="M1700 28q1-10 12-12M1703 28q1-7 9-9M1706 28q1-4 6-6" stroke="#6e6e6e" stroke-width="1.5" fill="none"/><circle cx="1712" cy="28" r="1.5" fill="#6e6e6e"/>
<text x="1731" y="31" font-size="14" fill="#6e6e6e" font-family="Liberation Sans">РУС</text>
<text x="1811" y="20" font-size="14" fill="#6e6e6e" text-anchor="middle" font-family="Liberation Sans">11:21</text>
<text x="1811" y="42" font-size="14" fill="#6e6e6e" text-anchor="middle" font-family="Liberation Sans">05.10.2020</text>
<path d="M1868 15h19v13h-7l-3 4-3-4h-6z" stroke="#6e6e6e" stroke-width="1.3" fill="none"/>
</svg>
<!-- media control icons -->
<svg style="left:0;top:1008px" width="1920" height="30">
<g stroke="#fff" stroke-width="1.6" fill="none">
<path d="M38 13h4l5-5v15l-5-4h-4z"/><path d="M51 11q2 4 0 8M54 8q4 7 0 14M57 6q5 9 0 18"/>
<rect x="90" y="8" width="19" height="11"/><path d="M93 12h13M93 15h10M93 19v5l4-5"/>
<path d="M900.5 15A10.6 10.6 0 0 1 920 15"/><path d="M901 9.5v5.5h5.5"/>
<path d="M1000 15A10.6 10.6 0 0 1 1019.5 15"/><path d="M1019 9.5v5.5h-5.5"/>
<path d="M956.5 9v16M963.5 9v16" stroke-width="1.8"/>
<path d="M1708 23l3-7 11-11 4 4-11 11z M1720 7l4 4"/>
<rect x="1759" y="11" width="21" height="13"/><rect x="1765" y="15" width="9" height="5" stroke-width="1"/>
<path d="M1811 26l7-7M1812 19h6v6M1832 7l-7 7M1825 8v6h6"/>
</g>
<text x="910" y="26" font-size="12" fill="#eee" text-anchor="middle" font-family="Liberation Sans">10</text>
<text x="1010" y="26.5" font-size="12" fill="#eee" text-anchor="middle" font-family="Liberation Sans">30</text>
<g fill="#fff"><circle cx="1863" cy="17" r="1.4"/><circle cx="1871" cy="17" r="1.4"/><circle cx="1879" cy="17" r="1.4"/></g>
</svg>


</body></html>
